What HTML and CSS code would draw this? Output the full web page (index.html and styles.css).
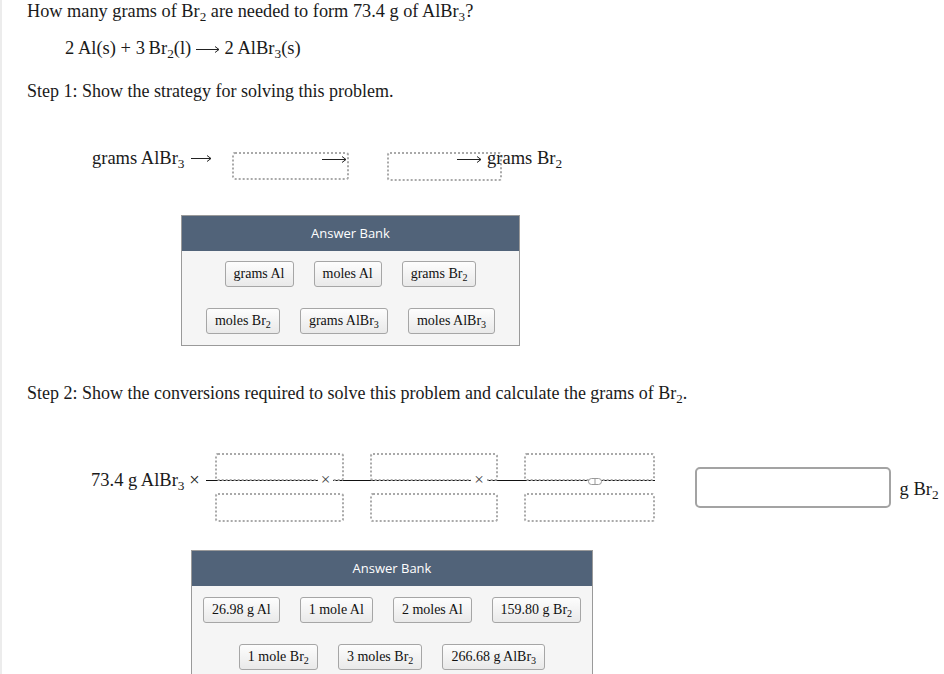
FILE: index.html
```html
<!DOCTYPE html>
<html lang="en">
<head>
  <meta charset="UTF-8" />
  <meta name="viewport" content="width=device-width, initial-scale=1" />
  <title>Grams of Br2</title>
  <link rel="stylesheet" href="styles.css">
</head>
<body>
<div class="page">

  <p class="question">How many grams of Br<sub>2</sub> are needed to form 73.4 g of AlBr<sub>3</sub>?</p>

  <p class="equation">2&#8201;Al(s) + 3&#8201;Br<sub>2</sub>(l) <svg class="arrow" width="24" height="9" viewBox="0 0 24 9"><path d="M0 4.5H23M19 1.5L23 4.5L19 7.5" fill="none" stroke="#222" stroke-width="1"/></svg> 2&#8201;AlBr<sub>3</sub>(s)</p>

  <p class="step">Step 1: Show the strategy for solving this problem.</p>

  <!-- Strategy row -->
  <div class="strategy">
    <span class="math">grams AlBr<sub>3</sub></span>
    <svg class="arrow arrow-first" width="21" height="9" viewBox="0 0 21 9"><path d="M0 4.5H20M16 1.5L20 4.5L16 7.5" fill="none" stroke="#222" stroke-width="1"/></svg>
    <div class="drop drop-one">
      <svg class="arrow" width="25" height="9" viewBox="0 0 25 9"><path d="M0 4.5H24M20 1.5L24 4.5L20 7.5" fill="none" stroke="#222" stroke-width="1"/></svg>
    </div>
    <div class="drop drop-two"></div>
    <span class="math last"><svg class="arrow" width="25" height="9" viewBox="0 0 25 9"><path d="M0 4.5H24M20 1.5L24 4.5L20 7.5" fill="none" stroke="#222" stroke-width="1"/></svg> grams Br<sub>2</sub></span>
  </div>

  <div class="bank bank-one">
    <div class="bank-head">Answer Bank</div>
    <div class="bank-body">
      <div class="bank-row">
        <span class="chip">grams Al</span>
        <span class="chip">moles Al</span>
        <span class="chip">grams Br<sub>2</sub></span>
      </div>
      <div class="bank-row">
        <span class="chip">moles Br<sub>2</sub></span>
        <span class="chip">grams AlBr<sub>3</sub></span>
        <span class="chip">moles AlBr<sub>3</sub></span>
      </div>
    </div>
  </div>

  <p class="step step-two">Step 2: Show the conversions required to solve this problem and calculate the grams of Br<sub>2</sub>.</p>

  <!-- Conversion chain -->
  <div class="convert">
    <span class="math start">73.4 g AlBr<sub>3</sub> &times;</span>
    <div class="chain">
      <div class="frac f1">
        <div class="drop num"></div>
        <div class="drop den"></div>
        <span class="times">&times;</span>
      </div>
      <div class="frac f2">
        <div class="drop num"></div>
        <div class="drop den"></div>
        <span class="times">&times;</span>
      </div>
      <div class="frac f3">
        <div class="drop num"></div>
        <div class="drop den"></div>
        <svg class="link" width="14" height="7" viewBox="0 0 14 7"><rect x="0.5" y="0.5" width="13" height="6" rx="3" fill="#fff" stroke="#999"/><path d="M7 0.5V6.5" stroke="#999"/></svg>
      </div>
    </div>
    <div class="result"></div>
    <span class="math unit">g Br<sub>2</sub></span>
  </div>

  <div class="bank bank-two">
    <div class="bank-head">Answer Bank</div>
    <div class="bank-body">
      <div class="bank-row">
        <span class="chip">26.98 g Al</span>
        <span class="chip">1 mole Al</span>
        <span class="chip">2 moles Al</span>
        <span class="chip">159.80 g Br<sub>2</sub></span>
      </div>
      <div class="bank-row">
        <span class="chip">1 mole Br<sub>2</sub></span>
        <span class="chip">3 moles Br<sub>2</sub></span>
        <span class="chip">266.68 g AlBr<sub>3</sub></span>
      </div>
    </div>
  </div>

</div>
</body>
</html>
```

FILE: styles.css
```css
body {
  margin: 0;
  font-family: "Liberation Serif", "Times New Roman", serif;
  color: #1a1a1a;
  background: #fff;
}
.page {
  border-left: 2px solid #ececec;
  padding-left: 25px;
  min-height: 674px;
  overflow: hidden;
}
p {
  margin: 0;
}
sub {
  font-size: 0.72em;
  line-height: 0;
  vertical-align: -0.32em;
}
.question {
  font-size: 18.3px;
  line-height: 20px;
  padding-top: 1px;
}
.equation {
  font-size: 18.5px;
  line-height: 20px;
  margin: 17px 0 0 38px;
}
.arrow {
  vertical-align: middle;
}
.step {
  font-size: 18px;
  line-height: 20px;
  margin-top: 23px;
}

/* strategy */
.strategy {
  display: flex;
  align-items: flex-start;
  margin: 47px 0 0 65px;
}
.math {
  font-size: 18.5px;
  line-height: 20px;
  white-space: nowrap;
}
.arrow-first {
  margin: 6px 0 0 7px;
}
.drop {
  border: 2px dotted #a9a9a9;
  border-radius: 3px;
  box-sizing: border-box;
}
.drop-one {
  width: 117px;
  height: 28px;
  margin: 4px 0 0 20px;
  display: flex;
  justify-content: flex-end;
  align-items: flex-start;
}
.drop-one .arrow {
  margin-top: 1px;
}
.drop-two {
  width: 115px;
  height: 29px;
  margin: 4px 0 0 38px;
}
.last {
  margin-left: -45px;
}

/* answer bank */
.bank {
  border: 1px solid #9a9a9a;
  background: #f5f5f5;
}
.bank-one {
  width: 337px;
  margin: 34px 0 0 154px;
}
.bank-two {
  width: 400px;
  margin: 28px 0 0 164px;
}
.bank-head {
  background: #516379;
  color: #fff;
  font-family: "Open Sans", sans-serif;
  font-size: 13px;
  height: 35px;
  line-height: 35px;
  text-align: center;
}
.bank-body {
  padding: 10px 0 11px;
  display: flex;
  flex-direction: column;
  gap: 21px;
}
.bank-two .bank-body {
  padding-top: 11px;
}
.bank-row {
  display: flex;
  justify-content: center;
  gap: 20px;
}
.chip {
  height: 26px;
  box-sizing: border-box;
  padding: 0 8px;
  border: 1px solid #a6a6a6;
  border-radius: 3px;
  background: linear-gradient(#fdfdfd, #e9e9e9);
  font-size: 14px;
  line-height: 23px;
  color: #111;
  white-space: nowrap;
}

/* step 2 */
.step-two {
  margin-top: 37px;
}
.convert {
  display: flex;
  align-items: flex-start;
  margin: 50px 0 0 64px;
}
.start {
  margin-top: 17px;
}
.chain {
  position: relative;
  display: flex;
  gap: 26px;
  padding-left: 9px;
  margin-left: 6px;
  width: 440px;
}
.chain::before {
  content: "";
  position: absolute;
  left: 0;
  right: 0;
  top: 27px;
  border-top: 1px solid #111;
}
.frac {
  position: relative;
  display: flex;
  flex-direction: column;
  gap: 12px;
}
.f1 { width: 130px; }
.f2 { width: 128px; }
.f3 { width: 131px; }
.frac .num {
  height: 28px;
  position: relative;
  z-index: 1;
}
.frac .den {
  height: 29px;
}
.times {
  position: absolute;
  top: 18px;
  right: 11px;
  z-index: 2;
  background: #fff;
  padding: 0 3px;
  font-size: 17px;
  line-height: 18px;
  color: #444;
}
.link {
  position: absolute;
  top: 25px;
  left: 64px;
  z-index: 2;
}
.result {
  width: 196px;
  height: 41px;
  box-sizing: border-box;
  border: 2px solid #a3a3a3;
  border-radius: 5px;
  margin: 14px 0 0 40px;
}
.unit {
  margin: 26px 0 0 9px;
}
```
